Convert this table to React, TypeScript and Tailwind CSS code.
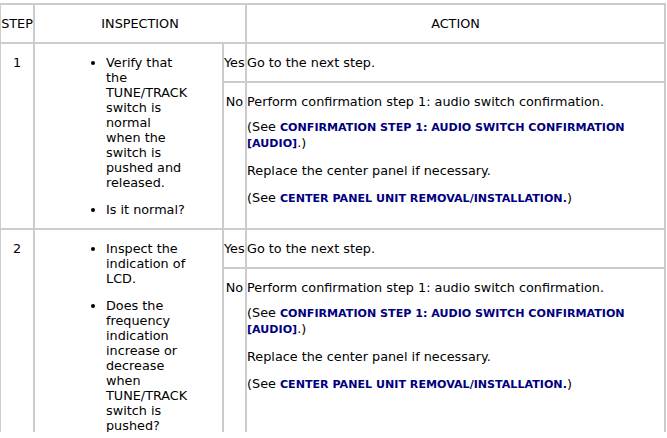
import React from "react";

const Link = ({ children }: { children: React.ReactNode }) => (
    <span className="font-bold text-[11.1px] leading-[15px] text-[#000080]">{children}</span>
);

const NoAction = ({ minH }: { minH: string }) => (
    <div className={`pt-[11px] ${minH}`}>
        <p className="mb-[10px]">Perform confirmation step 1: audio switch confirmation.</p>
        <p className="mb-[12px]">
            (See <Link>CONFIRMATION STEP 1: AUDIO SWITCH CONFIRMATION [AUDIO]</Link>.)
        </p>
        <p className="mb-[12px]">Replace the center panel if necessary.</p>
        <p className="mb-[12px]">
            (See <Link>CENTER PANEL UNIT REMOVAL/INSTALLATION.</Link>)
        </p>
    </div>
);

const cell = "border-r-2 border-b-2 border-[#cccccc] p-0";

const StepRows = ({ step, items, minH }: { step: string; items: string[]; minH: string }) => (
    <>
        <tr>
            <td rowSpan={2} className={`${cell} align-top text-center pt-[11px]`}>{step}</td>
            <td rowSpan={2} className={`${cell} align-top`}>
                <ul className="list-disc pl-[71px] pr-[34px] mt-[11px] mb-[11px]">
                    {items.map((it, i) => (
                        <li key={i} className={i > 0 ? "mt-[12px]" : ""}>{it}</li>
                    ))}
                </ul>
            </td>
            <td className={`${cell} align-middle whitespace-nowrap`}>Yes</td>
            <td className={`${cell} align-middle pt-[11px] pb-[11px]`}>Go to the next step.</td>
        </tr>
        <tr>
            <td className={`${cell} align-top text-center whitespace-nowrap pt-[11px]`}>No</td>
            <td className={`${cell} align-top`}>
                <NoAction minH={minH} />
            </td>
        </tr>
    </>
);

const App = () => {
    return (
        <div className="w-[667px] h-[438px] bg-white overflow-hidden">
            <div className="h-[432px] overflow-hidden pt-[3px]">
                <table
                    className="-ml-px w-[667px] table-fixed border-separate border-spacing-0 border-t-2 border-l-2 border-[#cccccc] text-[12.8px] leading-[15px] text-black"
                    style={{ fontFamily: '"DejaVu Sans", Verdana, sans-serif' }}
                >
                    <colgroup>
                        <col className="w-[34px]" />
                        <col className="w-[189px]" />
                        <col className="w-[23px]" />
                        <col className="w-[419px]" />
                    </colgroup>
                    <tbody>
                        <tr>
                            <td className={`${cell} text-center pt-[11px] pb-[11px]`}>STEP</td>
                            <td colSpan={2} className={`${cell} text-center pt-[11px] pb-[11px]`}>INSPECTION</td>
                            <td className={`${cell} text-center pt-[11px] pb-[11px]`}>ACTION</td>
                        </tr>
                        <StepRows
                            step="1"
                            minH="min-h-[145px]"
                            items={[
                                "Verify that the TUNE/TRACK switch is normal when the switch is pushed and released.",
                                "Is it normal?",
                            ]}
                        />
                        <StepRows
                            step="2"
                            minH="min-h-[176px]"
                            items={[
                                "Inspect the indication of LCD.",
                                "Does the frequency indication increase or decrease when TUNE/TRACK switch is pushed?",
                            ]}
                        />
                    </tbody>
                </table>
            </div>
        </div>
    );
};

export default App;
